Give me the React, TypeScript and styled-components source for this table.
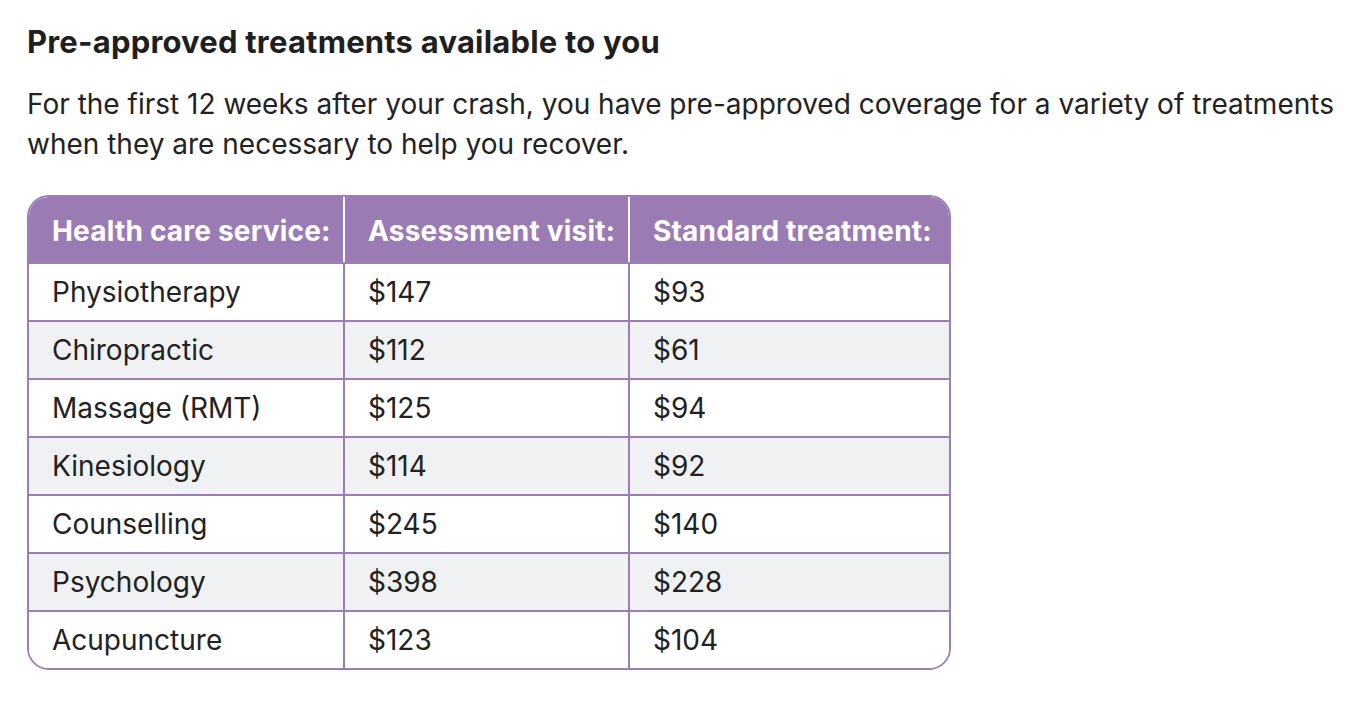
import React from "react";
import styled, { createGlobalStyle } from "styled-components";

const Global = createGlobalStyle`
  html, body { margin: 0; padding: 0; background: #ffffff; }
  body { font-family: Inter, "Noto Sans", sans-serif; color: #222222; }
`;

const Page = styled.main`
  padding: 23px 27px 0 27px;
`;

const Title = styled.h2`
  margin: 0;
  font-size: 31px;
  line-height: 38px;
  font-weight: 700;
  letter-spacing: 0.2px;
  color: #1f1f1f;
`;

const Intro = styled.p`
  margin: 23px 0 0 0;
  font-size: 28px;
  line-height: 40px;
  font-weight: 400;
  letter-spacing: 0;
  color: #222222;
  white-space: nowrap;
`;

const Table = styled.table`
  margin-top: 31px;
  width: 924px;
  border-collapse: separate;
  border-spacing: 0;
  border: 2px solid #9d7db5;
  border-radius: 22px;
  overflow: hidden;
  table-layout: fixed;
`;

const HeadCell = styled.th<{ $last?: boolean }>`
  box-sizing: border-box;
  background: #9b7bb4;
  color: #ffffff;
  text-align: left;
  font-size: 28px;
  font-weight: 700;
  letter-spacing: 0.2px;
  height: 65px;
  padding: 3px 0 0 23px;
  white-space: nowrap;
  border-right: ${(p) => (p.$last ? "none" : "2px solid #ffffff")};
`;

const Row = styled.tr<{ $striped: boolean }>`
  background: ${(p) => (p.$striped ? "#f0f1f3" : "#ffffff")};
`;

const Cell = styled.td<{ $last?: boolean }>`
  font-size: 28px;
  font-weight: 400;
  letter-spacing: 0;
  color: #222222;
  height: 56px;
  padding: 0 0 0 23px;
  border-top: 2px solid #9d7db5;
  border-right: ${(p) => (p.$last ? "none" : "2px solid #9d7db5")};
`;

const rows = [
  ["Physiotherapy", "$147", "$93"],
  ["Chiropractic", "$112", "$61"],
  ["Massage (RMT)", "$125", "$94"],
  ["Kinesiology", "$114", "$92"],
  ["Counselling", "$245", "$140"],
  ["Psychology", "$398", "$228"],
  ["Acupuncture", "$123", "$104"],
];

export default function App() {
  return (
    <>
      <Global />
      <Page>
        <Title>Pre-approved treatments available to you</Title>
        <Intro>
          For the first 12 weeks after your crash, you have pre-approved coverage for a variety of treatments
          <br />
          when they are necessary to help you recover.
        </Intro>
        <Table>
          <colgroup>
            <col style={{ width: 316 }} />
            <col style={{ width: 285 }} />
            <col />
          </colgroup>
          <thead>
            <tr>
              <HeadCell>Health care service:</HeadCell>
              <HeadCell>Assessment visit:</HeadCell>
              <HeadCell $last>Standard treatment:</HeadCell>
            </tr>
          </thead>
          <tbody>
            {rows.map((r, i) => (
              <Row key={r[0]} $striped={i % 2 === 1}>
                <Cell>{r[0]}</Cell>
                <Cell>{r[1]}</Cell>
                <Cell $last>{r[2]}</Cell>
              </Row>
            ))}
          </tbody>
        </Table>
      </Page>
    </>
  );
}
